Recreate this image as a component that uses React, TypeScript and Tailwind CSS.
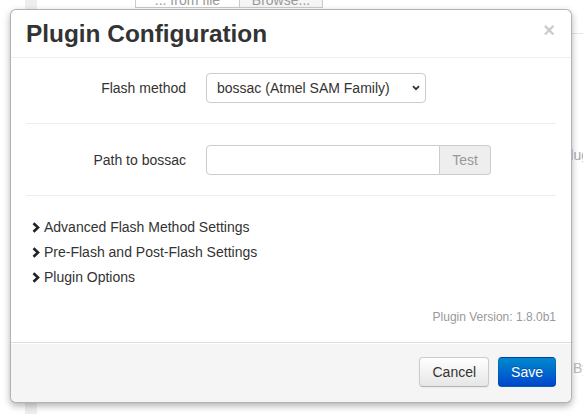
import { useState } from "react";

const sections = [
  "Advanced Flash Method Settings",
  "Pre-Flash and Post-Flash Settings",
  "Plugin Options",
];

function Chevron() {
  return (
    <svg width="8" height="11" viewBox="0 0 8 11" className="shrink-0">
      <polyline
        points="1.5,1.3 6,5.5 1.5,9.7"
        fill="none"
        stroke="#222"
        strokeWidth="2.6"
      />
    </svg>
  );
}

export default function App() {
  const [method, setMethod] = useState("bossac");

  return (
    <div className="relative h-[414px] w-[583px] overflow-hidden bg-white font-['Liberation_Sans',Arial,sans-serif] text-[14px] text-[#333]">
      {/* page behind the dialog */}
      <div className="absolute left-[25px] top-0 h-full w-[12px] bg-[#eee]" />
      <div className="absolute left-[135px] top-[-20px] flex h-[28px] text-[#999]">
        <div className="w-[105px] border border-[#ccc] pt-[9px] text-center leading-[20px]">
          ... from file
        </div>
        <div className="w-[83px] border border-l-0 border-[#ccc] bg-[#f5f5f5] pt-[9px] text-center leading-[20px]">
          Browse...
        </div>
      </div>
      <div className="absolute left-[555px] top-[33px] w-[40px] border-t border-[#e5e5e5]" />
      <div className="absolute left-[561px] top-[145px] leading-[20px] text-[#aaa]">Plugins</div>
      <div className="absolute left-[573px] top-[358px] leading-[20px] text-[#bbb]">By</div>

      {/* dialog */}
      <div className="absolute left-[10px] top-[9px] flex w-[562px] flex-col rounded-[6px] border border-black/30 bg-white shadow-[0_3px_7px_rgba(0,0,0,0.3)]">
        <div className="flex items-start justify-between border-b border-[#eee] px-[15px] pb-[8px] pt-[9px]">
          <h3 className="text-[24.4px] font-bold leading-[30px] text-[#333]">
            Plugin Configuration
          </h3>
          <button
            type="button"
            className="mt-[1px] mr-[1px] text-[20px] font-bold leading-[20px] text-black opacity-20"
          >
            ×
          </button>
        </div>

        <div className="px-[15px] pt-[15px] pb-[15px]">
          <div className="flex items-center">
            <label className="w-[160px] text-right leading-[20px]">Flash method</label>
            <div className="relative ml-[20px] h-[30px] w-[220px]">
              <select
                value={method}
                onChange={(e) => setMethod(e.target.value)}
                className="h-full w-full appearance-none rounded-[4px] border border-[#ccc] bg-white pl-[10px] text-[14px] text-[#333] outline-none"
              >
                <option value="bossac">bossac (Atmel SAM Family)</option>
              </select>
              <svg
                width="8"
                height="6"
                viewBox="0 0 8 6"
                className="pointer-events-none absolute right-[6px] top-[12px]"
              >
                <polyline points="1,1.2 4,4.2 7,1.2" fill="none" stroke="#333" strokeWidth="1.8" />
              </svg>
            </div>
          </div>

          <hr className="mt-[20px] mb-[21px] border-t border-[#eee]" />

          <div className="flex items-center">
            <label className="w-[160px] text-right leading-[20px]">Path to bossac</label>
            <div className="ml-[20px] flex h-[30px]">
              <input
                type="text"
                className="h-full w-[234px] rounded-l-[4px] border border-[#ccc] bg-white px-[6px] outline-none"
              />
              <div className="flex h-full w-[51px] items-center justify-center rounded-r-[4px] border border-l-0 border-[#ccc] bg-[#eee] text-[#999]">
                Test
              </div>
            </div>
          </div>

          <hr className="mt-[20px] mb-[21px] border-t border-[#eee]" />

          <div className="flex flex-col gap-[5px]">
            {sections.map((s) => (
              <div key={s} className="flex h-[20px] items-center gap-[4px] pl-[6px] leading-[20px]">
                <Chevron />
                <span>{s}</span>
              </div>
            ))}
          </div>

          <div className="mt-[20px] text-right text-[12px] leading-[20px] text-[#999]">
            Plugin Version: 1.8.0b1
          </div>
        </div>

        <div className="flex justify-end gap-[9px] rounded-b-[6px] border-t border-[#ddd] bg-[#f5f5f5] px-[15px] pb-[15px] pt-[14px] shadow-[inset_0_1px_0_#fff]">
          <button
            type="button"
            className="h-[30px] rounded-[4px] border border-[#ccc] border-b-[#b3b3b3] bg-linear-to-b from-white to-[#e6e6e6] px-[12px] leading-[20px] text-[#333] shadow-[inset_0_1px_0_rgba(255,255,255,0.2),0_1px_2px_rgba(0,0,0,0.05)]"
          >
            Cancel
          </button>
          <button
            type="button"
            className="h-[30px] rounded-[4px] border border-black/10 border-b-black/25 bg-linear-to-b from-[#0088cc] to-[#0044cc] px-[12px] leading-[20px] text-white [text-shadow:0_-1px_0_rgba(0,0,0,0.25)]"
          >
            Save
          </button>
        </div>
      </div>
    </div>
  );
}
